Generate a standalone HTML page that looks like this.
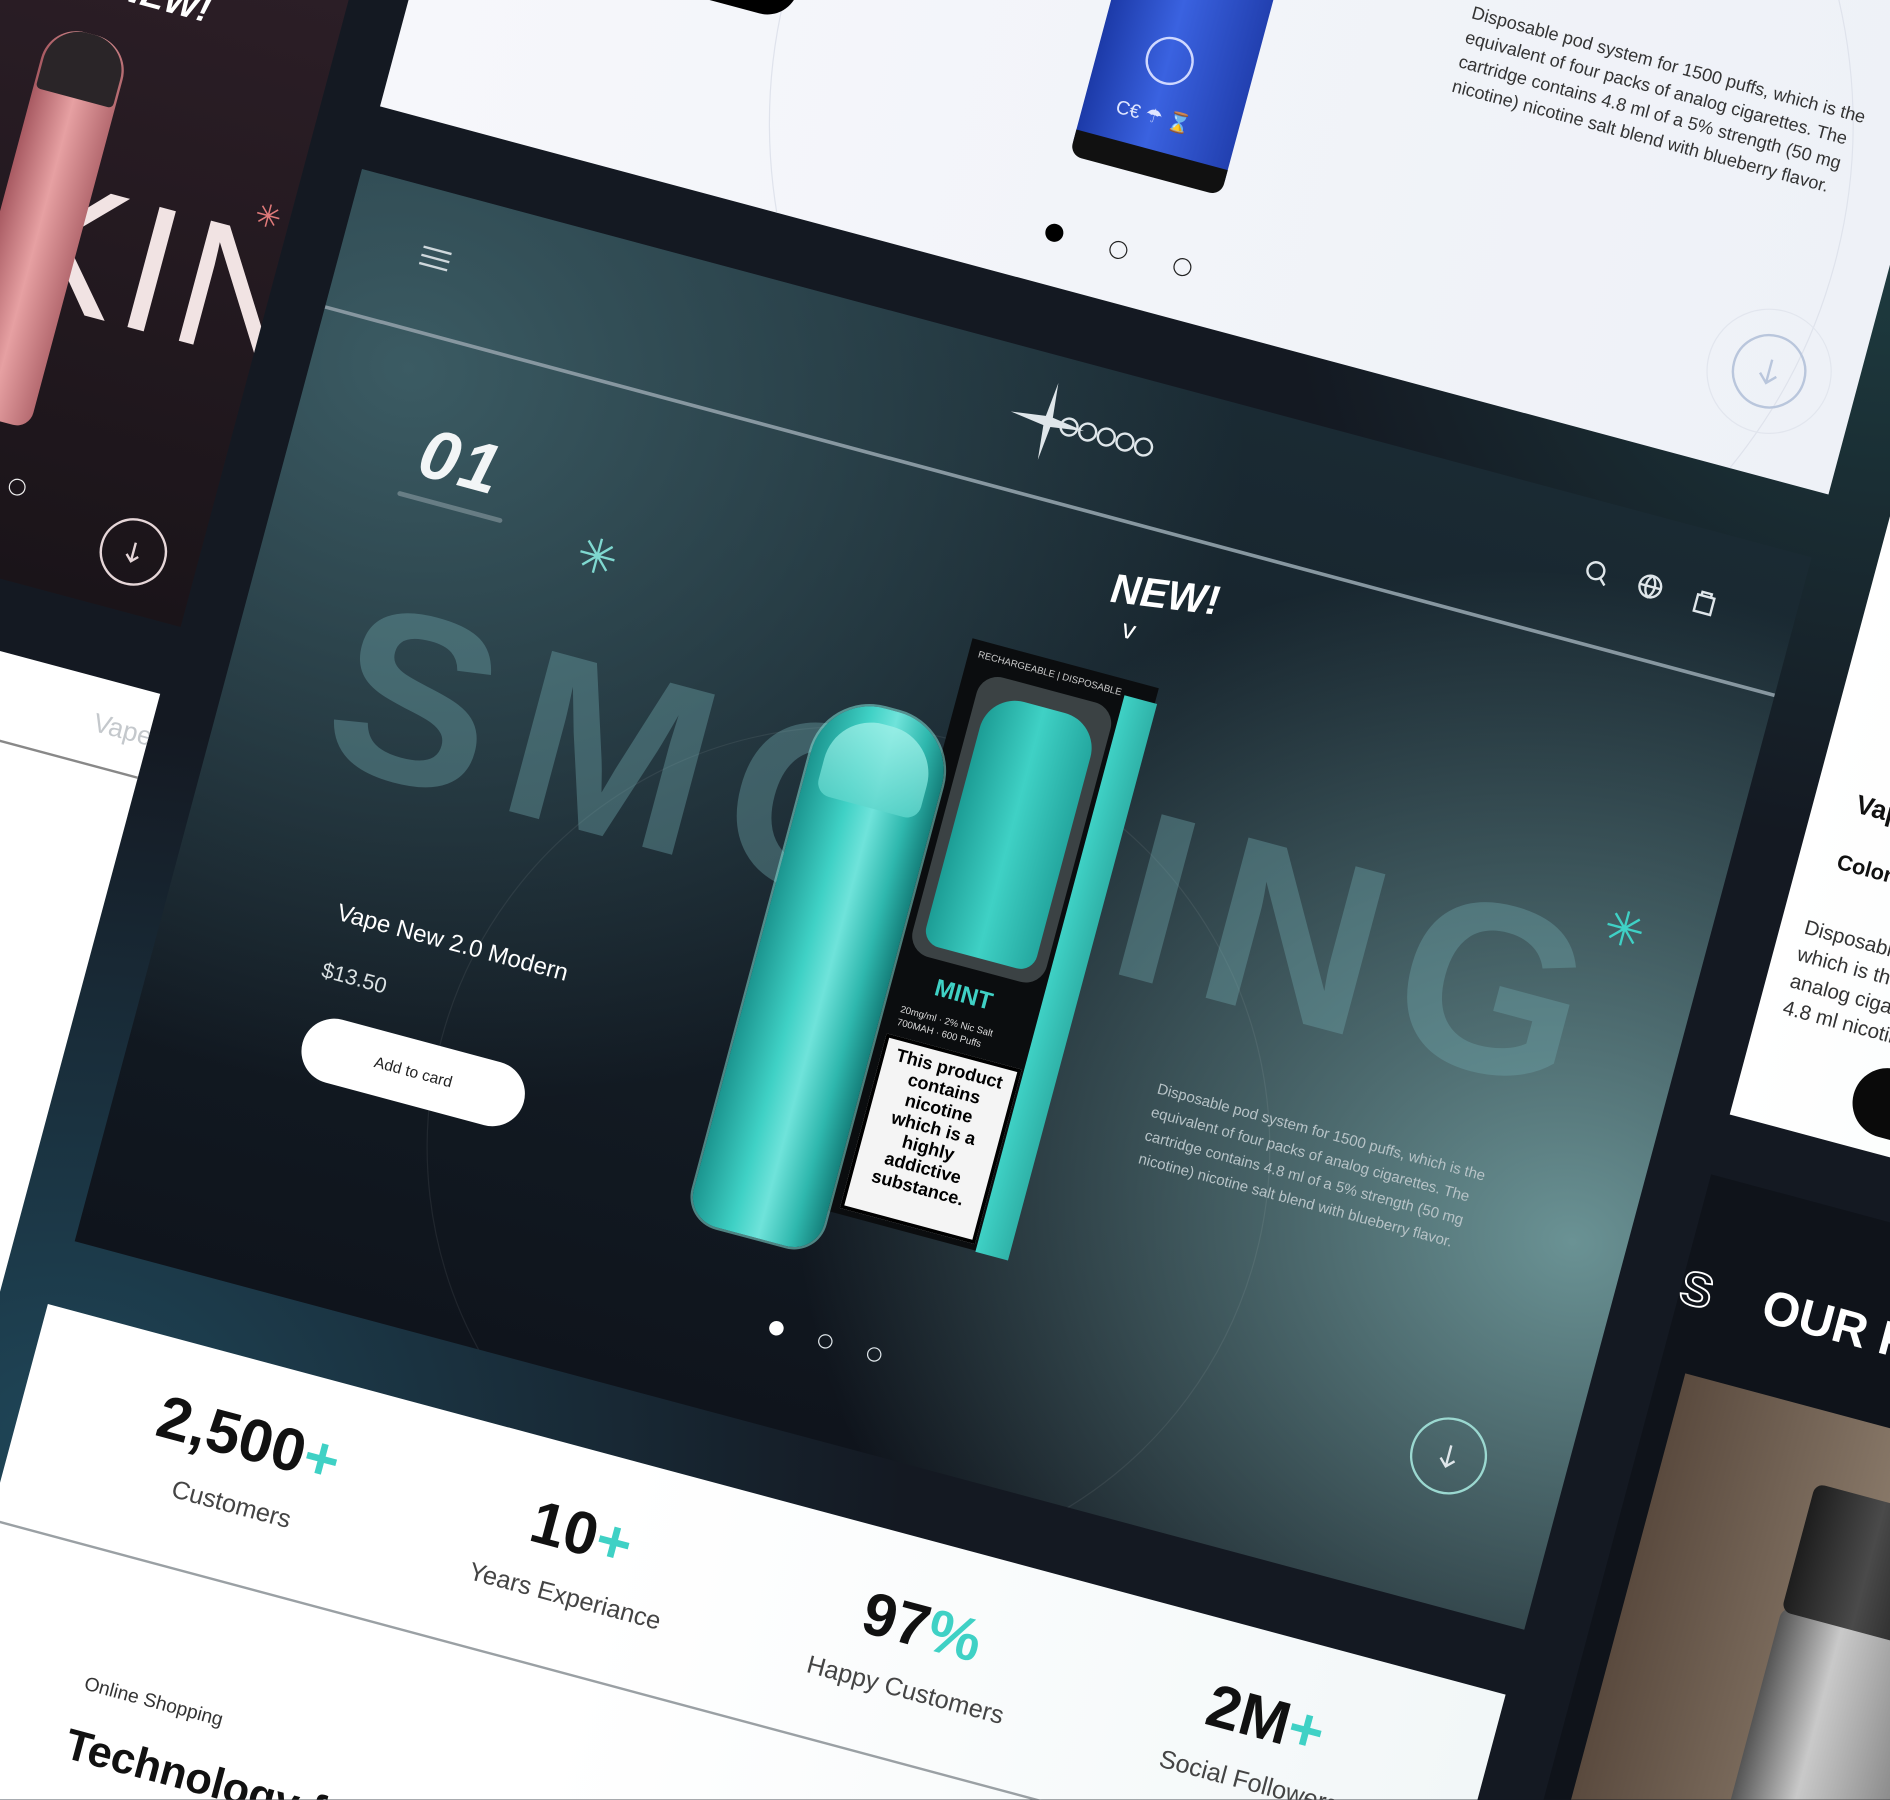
<!DOCTYPE html>
<html><head><meta charset="utf-8">
<style>
html,body{margin:0;padding:0;width:1890px;height:1800px;overflow:hidden;background:#131821;}
*{box-sizing:border-box}
#wrap{position:absolute;left:0;top:0;width:1568px;height:1493px;transform:scale(1.2054);transform-origin:0 0;overflow:hidden;
background:radial-gradient(ellipse 700px 600px at 50px 1200px,#1f4658 0%,rgba(20,30,40,0) 100%),radial-gradient(ellipse 500px 500px at 1568px 200px,#1e3c40 0%,rgba(20,30,40,0) 100%),#141922;font-family:"Liberation Sans",sans-serif;}
#rot{position:absolute;left:784px;top:746px;width:0;height:0;transform:rotate(15deg);}
.p{position:absolute;overflow:hidden}
.a{position:absolute}
</style></head><body>
<div id="wrap"><div id="rot">

<!-- top white panel -->
<div class="p" style="left:-623px;top:-1300px;width:1244px;height:786px;background:linear-gradient(90deg,#f6f7fb,#eef1f7);">
  <div class="a" style="left:300px;top:150px;width:900px;height:900px;border:1px solid #dfe3ec;border-radius:50%"></div>
  <div class="a" style="left:190px;top:480px;width:120px;height:150px;background:#000;border-radius:0 0 26px 26px"></div>
  <div class="a" style="left:563px;top:420px;width:130px;height:250px;background:linear-gradient(90deg,#1c3aa8,#3a62e0 45%,#2240b0);border-radius:6px"></div>
  <div class="a" style="left:563px;top:655px;width:130px;height:22px;background:#111;border-radius:0 0 10px 10px"></div>
  <div class="a" style="left:590px;top:618px;color:#dfe6ff;font-size:16px">C€ ☂ ⌛</div>
  <div class="a" style="left:603px;top:560px;width:40px;height:40px;border:2px solid #cfd8ff;border-radius:50%"></div>
  <div class="a" style="left:560px;top:735px;width:15px;height:15px;background:#000;border-radius:50%"></div>
  <div class="a" style="left:615px;top:735px;width:15px;height:15px;border:1.5px solid #222;border-radius:50%"></div>
  <div class="a" style="left:670px;top:735px;width:15px;height:15px;border:1.5px solid #222;border-radius:50%"></div>
  <div class="a" style="left:855px;top:466px;width:340px;font-size:15px;line-height:21px;color:#333">Disposable pod system for 1500 puffs, which is the equivalent of four packs of analog cigarettes. The cartridge contains 4.8 ml of a 5% strength (50 mg nicotine) nicotine salt blend with blueberry flavor.</div>
  <div class="a" style="left:1118px;top:648px;width:104px;height:104px;border:1px solid #e2e6ee;border-radius:50%"></div>
  <svg class="a" style="left:1130px;top:660px" width="80" height="80" viewBox="0 0 80 80"><circle cx="40" cy="40" r="30" fill="none" stroke="#b9c6dc" stroke-width="2"/><path d="M40 30V50M33 43L40 50L47 43" fill="none" stroke="#b9c6dc" stroke-width="2"/></svg>
</div>

<!-- main dark panel -->
<div class="p" style="left:-624px;top:-460px;width:1245px;height:921px;background:radial-gradient(ellipse 700px 600px at 80px 150px,#3b5b63 0%,rgba(30,45,52,0) 100%),radial-gradient(ellipse 650px 550px at 1200px 600px,#6a9294 0%,rgba(40,60,65,0) 100%),linear-gradient(180deg,#1a2a33,#0f141c);">
  <div class="a" style="left:250px;top:330px;width:700px;height:700px;border:1px solid rgba(255,255,255,0.07);border-radius:50%"></div>
  <div class="a" style="left:0;top:117px;width:1245px;height:3px;background:#8797a0"></div>
  <div class="a" style="left:66px;top:48px;width:24px;height:2px;background:#cfd8dc;box-shadow:0 7px 0 #cfd8dc,0 14px 0 #cfd8dc"></div>
  <svg class="a" style="left:560px;top:20px" width="150" height="70" viewBox="0 0 150 70"><path d="M44 2L47 31L75 35L47 39L44 68L41 39L12 35L41 31Z" fill="#dfe6ea"/><g fill="none" stroke="#dfe6ea" stroke-width="2"><circle cx="62" cy="35" r="7"/><circle cx="78" cy="35" r="7"/><circle cx="94" cy="35" r="7"/><circle cx="110" cy="35" r="7"/><circle cx="126" cy="35" r="7"/></g></svg>
  <svg class="a" style="left:1064px;top:46px" width="130" height="26" viewBox="0 0 130 26"><g fill="none" stroke="#dfe6ea" stroke-width="2"><circle cx="11" cy="11" r="7"/><path d="M16 16L21 21"/><circle cx="58" cy="12" r="9"/><path d="M49 12H67M58 3C53 8 53 16 58 21C63 16 63 8 58 3"/><path d="M98 8H112V22H98Z"/><path d="M101 8V5H109V8"/></g></svg>
  <div class="a" style="left:108px;top:180px;font-size:58px;font-weight:bold;color:#f2f5f6;letter-spacing:2px;font-style:italic">01</div>
  <div class="a" style="left:98px;top:250px;width:90px;height:4px;background:rgba(200,210,215,0.35);border-radius:2px"></div>
  <div class="a" style="left:255px;top:238px;font-size:40px;color:#7fd8d0">✳</div>
  <div class="a" style="left:1158px;top:316px;font-size:40px;color:#3fd1c5">✳</div>
  <div class="a" style="left:90px;top:300px;font-size:200px;line-height:230px;letter-spacing:19px;font-weight:bold;color:rgba(110,165,170,0.40);white-space:nowrap">SMOKING</div>
  <div class="a" style="left:690px;top:150px;font-size:34px;font-weight:bold;color:#fff;font-style:italic;transform:rotate(-8deg)">NEW!</div>
  <div class="a" style="left:708px;top:192px;font-size:22px;color:#fff">v</div>
  <!-- box -->
  <div class="a" style="left:590px;top:245px;width:160px;height:490px;background:#0b0d0f"></div>
  <div class="a" style="left:724px;top:258px;width:28px;height:478px;background:linear-gradient(90deg,#3fd1c5,#2fb2a8)"></div>
  <div class="a" style="left:598px;top:252px;font-size:8px;color:#ccc;white-space:nowrap">RECHARGEABLE | DISPOSABLE</div>
  <div class="a" style="left:605px;top:270px;width:115px;height:240px;background:#3b4244;border-radius:18px"></div>
  <div class="a" style="left:615px;top:285px;width:95px;height:215px;background:linear-gradient(90deg,#1c9d95,#3fd1c5 50%,#24a79f);border-radius:30px 30px 14px 14px"></div>
  <div class="a" style="left:635px;top:522px;font-size:20px;font-weight:bold;color:#3fd1c5">MINT</div>
  <div class="a" style="left:612px;top:552px;font-size:8px;color:#ddd;line-height:11px">20mg/ml · 2% Nic Salt<br>700MAH · 600 Puffs</div>
  <div class="a" style="left:606px;top:580px;width:116px;height:150px;background:#f4f4f4;border:3px solid #000;padding:4px;font-size:15px;font-weight:bold;line-height:17px;text-align:center;color:#000">This product contains nicotine which is a highly addictive substance.</div>
  <!-- pen -->
  <div class="a" style="left:485px;top:320px;width:112px;height:452px;background:linear-gradient(90deg,#1b958f,#3fd1c5 35%,#6fe3da 55%,#2fb8ae 80%,#15807b);border-radius:50px 50px 26px 26px;box-shadow:0 0 0 2px rgba(140,240,230,0.5)"></div>
  <div class="a" style="left:497px;top:333px;width:88px;height:70px;background:linear-gradient(180deg,#9ff0e8,#5fd6cc);border-radius:40px 40px 12px 12px;opacity:.8"></div>
  <div class="a" style="left:140px;top:590px;font-size:20px;color:#fff;white-space:nowrap">Vape New 2.0 Modern</div>
  <div class="a" style="left:140px;top:640px;font-size:18px;color:#dbe2e4">$13.50</div>
  <div class="a" style="left:140px;top:686px;width:190px;height:54px;background:#fff;border-radius:27px;text-align:center;line-height:54px;font-size:13px;color:#222">Add to card</div>
  <div class="a" style="left:835px;top:556px;width:320px;font-size:12.5px;line-height:20px;color:#b7c3c7">Disposable pod system for 1500 puffs, which is the equivalent of four packs of analog cigarettes. The cartridge contains 4.8 ml of a 5% strength (50 mg nicotine) nicotine salt blend with blueberry flavor.</div>
  <div class="a" style="left:575px;top:834px;width:12px;height:12px;background:#fff;border-radius:50%"></div>
  <div class="a" style="left:617px;top:834px;width:12px;height:12px;border:1.5px solid #dfe6ea;border-radius:50%"></div>
  <div class="a" style="left:659px;top:834px;width:12px;height:12px;border:1.5px solid #dfe6ea;border-radius:50%"></div>
  <svg class="a" style="left:1113px;top:764px" width="68" height="68" viewBox="0 0 68 68"><circle cx="34" cy="34" r="31" fill="none" stroke="#9bd8d0" stroke-width="2"/><path d="M34 25V43M28 37L34 43L40 37" fill="none" stroke="#dfe6ea" stroke-width="2"/></svg>
</div>

<!-- left dark panel -->
<div class="p" style="left:-1400px;top:-1300px;width:729px;height:1246px;background:linear-gradient(180deg,#3e2a34,#2a1d25 60%,#1a1419);">
  <div class="a" style="left:400px;top:880px;font-size:150px;line-height:170px;color:#f1e3e3;white-space:nowrap;width:320px;text-align:right;letter-spacing:4px">SKIN</div>
  <div class="a" style="left:495px;top:790px;width:70px;height:330px;background:linear-gradient(90deg,#a85a62,#e6a0a2 50%,#b56a70);border-radius:30px 30px 14px 14px"></div>
  <div class="a" style="left:497px;top:790px;width:66px;height:55px;background:#2a2528;border-radius:30px 30px 4px 4px"></div>
  <div class="a" style="left:540px;top:730px;font-size:30px;font-weight:bold;font-style:italic;color:#fff">NEW!</div>
  <div class="a" style="left:700px;top:883px;font-size:26px;color:#e07a7a">✳</div>
  <div class="a" style="left:561px;top:1162px;width:14px;height:14px;border:1.5px solid #eee;border-radius:50%"></div>
  <svg class="a" style="left:645px;top:1166px" width="60" height="60" viewBox="0 0 60 60"><circle cx="30" cy="30" r="27" fill="none" stroke="#e6d6d8" stroke-width="2"/><path d="M30 22V38M25 33L30 38L35 33" fill="none" stroke="#e6d6d8" stroke-width="2"/></svg>
</div>

<!-- left white panel -->
<div class="p" style="left:-1400px;top:4px;width:727px;height:1000px;background:#fff;">
  <div class="a" style="left:680px;top:24px;font-size:22px;color:#c4c8cc">Vape</div>
  <div class="a" style="left:560px;top:71px;width:167px;height:2px;background:#888"></div>
</div>

<!-- right white panel -->
<div class="p" style="left:675px;top:-1300px;width:700px;height:1304px;background:linear-gradient(90deg,#fff,#eef7f5);">
  <div class="a" style="left:35px;top:1015px;font-size:22px;font-weight:bold;color:#111">Vape</div>
  <div class="a" style="left:32px;top:1068px;font-size:18px;font-weight:bold;color:#111">Color</div>
  <div class="a" style="left:20px;top:1126px;width:330px;font-size:17px;line-height:23px;color:#333">Disposable pod system for 1500 puffs, which is the equivalent of four packs of analog cigarettes. The cartridge contains 4.8 ml nicotine) nicotine salt</div>
  <div class="a" style="left:95px;top:1232px;width:200px;height:58px;background:#0a0a0a;border-radius:29px"></div>
</div>

<!-- right dark panel -->
<div class="p" style="left:673px;top:56px;width:700px;height:1000px;background:#0f131a;">
  <div class="a" style="left:0px;top:74px;font-size:40px;color:transparent;-webkit-text-stroke:1.5px #fff;font-weight:bold">S</div>
  <div class="a" style="left:70px;top:72px;font-size:40px;font-weight:bold;color:#fff;white-space:nowrap">OUR PRODUCTS</div>
  <div class="a" style="left:22px;top:165px;width:680px;height:800px;background:linear-gradient(90deg,#5a4a3e,#8a7a6a 30%,#b0a89c 60%,#d0cac2)"></div>
  <div class="a" style="left:150px;top:330px;width:130px;height:300px;background:linear-gradient(90deg,#555,#c9c9c9 40%,#8a8a8a);border-radius:10px"></div>
  <div class="a" style="left:150px;top:225px;width:120px;height:110px;background:linear-gradient(90deg,#1d1d1d,#4a4a4a 50%,#1d1d1d);border-radius:8px"></div>
</div>

<!-- bottom white panel -->
<div class="p" style="left:-632px;top:517px;width:1252px;height:800px;background:linear-gradient(90deg,#fff 40%,#f2f7f8);">
  <div class="a" style="left:60px;top:36px;width:260px;text-align:center;font-size:50px;font-weight:bold;color:#111">2,500<span style="color:#3fd1c5">+</span></div>
  <div class="a" style="left:60px;top:110px;width:260px;text-align:center;font-size:21px;color:#444">Customers</div>
  <div class="a" style="left:347px;top:40px;width:260px;text-align:center;font-size:50px;font-weight:bold;color:#111">10<span style="color:#3fd1c5">+</span></div>
  <div class="a" style="left:347px;top:112px;width:260px;text-align:center;font-size:21px;color:#444">Years Experiance</div>
  <div class="a" style="left:640px;top:42px;width:260px;text-align:center;font-size:50px;font-weight:bold;color:#111">97<span style="color:#3fd1c5">%</span></div>
  <div class="a" style="left:640px;top:114px;width:260px;text-align:center;font-size:21px;color:#444">Happy Customers</div>
  <div class="a" style="left:935px;top:42px;width:260px;text-align:center;font-size:50px;font-weight:bold;color:#111">2M<span style="color:#3fd1c5">+</span></div>
  <div class="a" style="left:935px;top:114px;width:260px;text-align:center;font-size:21px;color:#444">Social Followers</div>
  <div class="a" style="left:0;top:184px;width:1252px;height:2px;background:#9aa0a4"></div>
  <div class="a" style="left:111px;top:288px;font-size:16px;color:#333">Online Shopping</div>
  <div class="a" style="left:109px;top:327px;font-size:36px;font-weight:bold;color:#111;white-space:nowrap">Technology for</div>
</div>

</div></div>
</body></html>
